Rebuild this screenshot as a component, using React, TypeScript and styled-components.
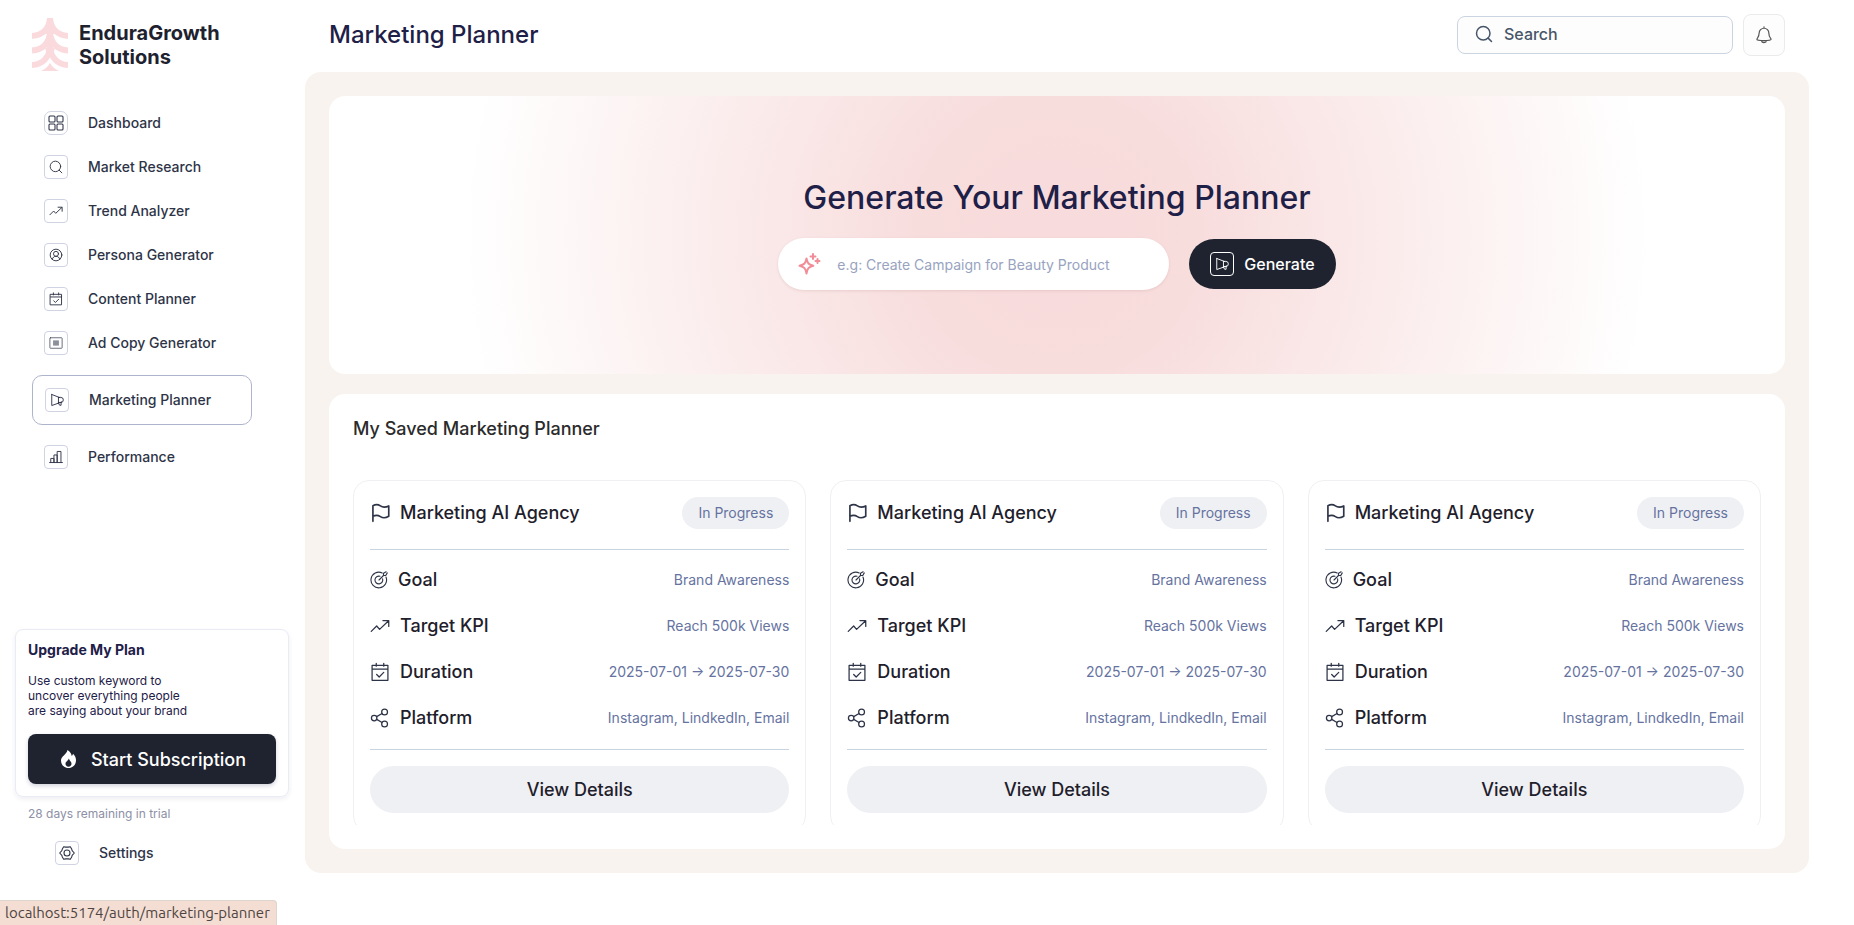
import React from 'react';
import styled, { createGlobalStyle, css } from 'styled-components';

const GlobalStyle = createGlobalStyle`
  *, *::before, *::after { box-sizing: border-box; }
  body { margin: 0; background: #fff; font-family: Inter, sans-serif; color: #1f2430; }
  h1, h2, h3, p, ul, dl, dd { margin: 0; padding: 0; }
  button, input { font-family: inherit; }
`;

const Page = styled.div`
  display: flex;
  min-height: 100vh;
`;

const Sidebar = styled.aside`
  flex: 0 0 305px;
  display: flex;
  flex-direction: column;
  padding: 18px 15px 0;
`;

const Brand = styled.div`
  display: flex;
  gap: 11px;
  padding-left: 17px;
  font-size: 20px;
  line-height: 24px;
  font-weight: 700;
  color: #1e222f;

  span { padding-top: 3px; width: 160px; }
`;

const Nav = styled.nav`
  display: flex;
  flex-direction: column;
  align-items: flex-start;
  padding: 30px 0 0 17px;
`;

const NavLink = styled.a<{ $active?: boolean }>`
  display: flex;
  align-items: center;
  gap: 20px;
  width: 220px;
  height: 44px;
  padding-left: 12px;
  border-radius: 10px;
  font-size: 14px;
  line-height: 20px;
  font-weight: 500;
  color: #2e3447;
  text-decoration: none;

  ${(p) => p.$active && css`
    height: 50px;
    margin: 10px 0;
    border: 1px solid #aeb4cb;
  `}
`;

const IconBox = styled.span<{ $light?: boolean; $round?: boolean }>`
  display: grid;
  place-items: center;
  width: 24px;
  height: 24px;
  border: 1px solid ${(p) => (p.$light ? '#fff' : '#d0d3e2')};
  border-radius: ${(p) => (p.$round ? 7 : 4)}px;
`;

const SidebarFoot = styled.div`
  margin-top: auto;
  padding-bottom: 50px;
`;

const Upgrade = styled.section`
  width: 274px;
  padding: 10px 12px 12px;
  border: 1px solid #e9ebf5;
  border-radius: 8px;
  box-shadow: 0 2px 5px rgba(40, 40, 80, 0.08);
  color: #1e2048;

  h2 { font-size: 14px; line-height: 20px; font-weight: 700; }
  p { padding: 13px 0 16px; width: 200px; font-size: 12px; line-height: 15px; }
`;

const Subscribe = styled.button`
  display: flex;
  align-items: center;
  justify-content: center;
  gap: 14px;
  width: 100%;
  height: 50px;
  padding: 0 6px 0 8px;
  border: 0;
  border-radius: 8px;
  background: #1f232f;
  box-shadow: 0 2px 4px rgba(30, 30, 90, 0.2);
  color: #fff;
  font-size: 18px;
  font-weight: 500;
`;

const Trial = styled.p`
  padding: 9px 13px 10px;
  font-size: 12px;
  line-height: 15px;
  color: #8d90a6;
`;

const FootNav = styled.nav`
  padding-left: 28px;
`;

const Main = styled.main`
  flex: 1;
  min-width: 0;
  padding-right: 45px;
`;

const TopBar = styled.header`
  display: flex;
  align-items: center;
  height: 72px;
  padding: 0 24px 2px;

  h1 { flex: 1; font-size: 24px; line-height: 32px; font-weight: 500; color: #1e2048; }
`;

const SearchBox = styled.label`
  display: flex;
  align-items: center;
  gap: 11px;
  width: 276px;
  height: 38px;
  padding: 0 17px 2px;
  border: 1px solid #cbd5e1;
  border-radius: 8px;
  background: #fdfdfd;
  color: #475569;
`;

const TextInput = styled.input`
  flex: 1;
  min-width: 0;
  padding: 0;
  border: 0;
  outline: 0;
  background: none;
  font-size: 16px;
  font-weight: 500;
  color: #475569;

  &::placeholder { color: #475569; opacity: 1; }
`;

const BellButton = styled.button`
  display: grid;
  place-items: center;
  width: 42px;
  height: 42px;
  margin-left: 10px;
  padding: 0;
  border: 1px solid #ebebeb;
  border-radius: 8px;
  background: #fdfdfd;
  color: #555;
`;

const Content = styled.div`
  display: flex;
  flex-direction: column;
  gap: 20px;
  padding: 24px;
  border-radius: 16px;
  background: #f8f3ee;
`;

const Hero = styled.section`
  display: flex;
  flex-direction: column;
  align-items: center;
  gap: 20px;
  padding: 82px 24px 84px;
  border-radius: 16px;
  background: radial-gradient(circle at center, #f8dbdc 0%, #f8dddd 19%, #fff 80%);

  h2 { font-size: 32px; line-height: 40px; font-weight: 500; color: #1e2048; }
`;

const PromptRow = styled.form`
  display: flex;
  align-items: center;
  gap: 20px;
`;

const PromptBox = styled.label`
  display: flex;
  align-items: center;
  gap: 16px;
  width: 391px;
  height: 52px;
  padding: 0 19px;
  border-radius: 26px;
  background: #fff;
  box-shadow: 0 1px 3px rgba(120, 60, 60, 0.12);
`;

const PromptInput = styled(TextInput)`
  font-size: 14px;
  font-weight: 400;

  &::placeholder { color: #98a3c0; }
`;

const GenerateButton = styled.button`
  display: flex;
  align-items: center;
  gap: 10px;
  height: 50px;
  padding: 0 21px;
  border: 0;
  border-radius: 25px;
  background: #1f232f;
  color: #fff;
  font-size: 16px;
  font-weight: 500;
`;

const Saved = styled.section`
  padding: 24px;
  border-radius: 16px;
  background: #fff;

  > h2 { font-size: 18px; line-height: 22px; font-weight: 500; color: #2b2b2b; }
`;

const CardViewport = styled.div`
  display: grid;
  grid-template-columns: repeat(3, 1fr);
  gap: 24px;
  height: 345px;
  margin-top: 40px;
  overflow: hidden;
`;

const PlanCard = styled.article`
  height: 352px;
  padding: 16px;
  border: 1px solid #f0f0f3;
  border-radius: 16px;
`;

const CardHead = styled.header`
  display: flex;
  align-items: center;
  gap: 10px;
  padding-bottom: 20px;
  border-bottom: 1px solid #c8d4df;
  color: #2e3447;

  h3 { flex: 1; font-size: 18px; line-height: 24px; font-weight: 500; color: #1e202b; }
`;

const Status = styled.span`
  height: 32px;
  padding: 0 16px;
  border-radius: 16px;
  background: #eff0f4;
  font-size: 14px;
  line-height: 32px;
  color: #66739f;
`;

const Facts = styled.dl`
  display: flex;
  flex-direction: column;
  gap: 22px;
  padding: 18px 0 19px;
  border-bottom: 1px solid #c8d4df;
`;

const Fact = styled.div`
  display: flex;
  align-items: center;
  justify-content: space-between;
  height: 24px;

  dt {
    display: flex;
    align-items: center;
    gap: 10px;
    font-size: 18px;
    line-height: 24px;
    font-weight: 500;
    color: #1e202b;
  }
  svg { color: #2e3447; }
  dd { font-size: 14px; line-height: 20px; color: #66739f; }
`;

const DetailsButton = styled.button`
  width: 100%;
  height: 47px;
  margin-top: 16px;
  border: 0;
  border-radius: 24px;
  background: #eff0f4;
  font-size: 18px;
  font-weight: 500;
  color: #1e202b;
`;

const LinkStatus = styled.div`
  position: fixed;
  left: 0;
  bottom: 0;
  height: 25px;
  padding: 0 6px 0 5px;
  border-top: 1px solid #dcd5d0;
  border-right: 1px solid #dcd5d0;
  border-radius: 0 4px 0 0;
  background: #f4ddd2;
  font-family: Ubuntu, "Noto Sans", sans-serif;
  font-size: 15px;
  line-height: 24px;
  color: #4e4542;
`;

type IconName = 'grid' | 'search' | 'trend' | 'persona' | 'calendar' | 'adcopy' | 'megaphone' | 'bars' | 'gear' | 'flag' | 'target' | 'share' | 'bell' | 'sparkle';

const shapes: Record<IconName, React.ReactNode> = {
  grid: <><rect x="1.5" y="1.5" width="9" height="9" rx="1.5" /><rect x="13.5" y="1.5" width="9" height="9" rx="1.5" /><rect x="1.5" y="13.5" width="9" height="9" rx="1.5" /><rect x="13.5" y="13.5" width="9" height="9" rx="1.5" /></>,
  search: <><circle cx="11" cy="11" r="9" /><path d="m17.5 17.5 4.5 4.5" /></>,
  trend: <path d="M1.5 18.5 8 12l3.5 4L22 6M15.5 5.500H22.500V12.500" />,
  persona: <><circle cx="12" cy="12" r="10" /><circle cx="12" cy="10" r="4.3" /><path d="M5.500 19.500C6.500 15.500 9 14.300 12 14.300s5.500 1.200 6.500 5.200" /></>,
  calendar: <path d="M2.500 4h19v18h-19zM2.500 8.500h19M7.500 1.500V5M16.500 1.500V5M8 15l3 3 5.500-5.500" />,
  adcopy: <><rect x="1.5" y="3" width="21" height="18" rx="1" strokeOpacity="0.75" /><rect x="7" y="7.5" width="10" height="9" fill="currentColor" fillOpacity="0.55" stroke="none" /></>,
  megaphone: <path d="M3 2.500v19L20 15.500M3 2.500l14 5.500M14.500 7.500v9.500M14.500 7.500h4a4.300 4.300 0 0 1 0 8.700h-4M14.500 17.500l2 3.500h2.500v-5" />,
  bars: <path d="M1 21.500h22M3 21.500V14.500h5.500v7M8.500 21.500V8.500h5.500v13M14 21.500V2.500h6.500v19" />,
  gear: <><path d="M7 2.500 10 3.200h4l3-.7 2 3.500.7 2.500L23 12l-3.300 3.500-.7 2.500-2 3.500-3-.7h-4l-3 .7-2-3.500-.7-2.500L1 12l3.300-3.500L5 6z" /><circle cx="12" cy="12" r="4.5" /></>,
  flag: <path d="M3.500 22V3.200c4-2.200 6.500-1.500 9 .3s5.500 2.300 10 0v12.500c-4.500 2.500-7.500 2-10 .3s-5-2.500-9-.3" />,
  target: <><path d="M21.300 8a10.400 10.400 0 1 1-5-5.300" /><path d="M16.800 10.500a5.200 5.200 0 1 1-3.500-3.500" /><path d="m12 12 6-6M18 6V3l3.500-2M18 6h3L23 2.500" /></>,
  share: <><circle cx="5" cy="12" r="3.3" /><circle cx="17.5" cy="4.8" r="3.5" /><circle cx="17.5" cy="19.2" r="3.5" /><path d="m8 10.300 6.500-3.700M8 13.700l6.500 3.700" /></>,
  bell: <path d="M5.500 9.500a6.500 6.500 0 0 1 13 0c0 6 3 6.500 3 8.300 0 1-1.500 1.700-9.500 1.700s-9.500-.7-9.500-1.700c0-1.800 3-2.300 3-8.300zM12 3V1M8.500 19.500c.5 3.500 6.500 3.500 7 0" />,
  sparkle: <><path d="M9.500 6.500c1 5 2 6 6.800 7.300-4.800 1.300-5.800 2.300-6.800 7.700-1-5.400-2-6.400-7-7.700 5-1.300 6-2.300 7-7.300z" /><path d="M16 2v5M13.500 4.500h5M20.500 7v4M18.500 9h4" /></>,
};

function Icon({ name, size = 14, stroke = 1.6 }: { name: IconName; size?: number; stroke?: number }) {
  return (
    <svg width={size} height={size} viewBox="0 0 24 24" fill="none" stroke="currentColor" strokeWidth={stroke} strokeLinecap="round" strokeLinejoin="round" aria-hidden="true">
      {shapes[name]}
    </svg>
  );
}

function TreeLogo() {
  return (
    <svg width="36" height="53" viewBox="0 0 36 53" fill="none" aria-hidden="true">
      <g stroke="#fadadd" strokeWidth="6">
        <path d="M18 0C17.500 11 10 17.500 0 18M18 0C18.500 11 26 17.500 36 18" />
        <path d="M18 14C17.500 25.500 10 32 0 32.500M18 14C18.500 25.500 26 32 36 32.500" />
        <path d="M18 28C17.500 40 10 46.500 0 47M18 28C18.500 40 26 46.500 36 47" />
      </g>
      <path d="M18 6l5 10h-2v14h2l-3 9h-4l-3-9h2V16h-2zM9 53c4-1.500 7-4.500 9-8 2 3.500 5 6.500 9 8z" fill="#fadadd" />
    </svg>
  );
}

function Flame() {
  return (
    <svg width="17" height="18" viewBox="0 0 17 18" fill="#fff" fillRule="evenodd" aria-hidden="true">
      <path d="M7.500 0c3 2 4 4 4.200 6 .8-.5 1.200-1.300 1.300-2.200C15 5.500 16 8 16 10.300 16 14.800 12.800 18 8.500 18S1 14.800 1 10.500C1 6 6.500 5 7.500 0zM8.800 8.500c-.5 2.300-3.300 3-3.300 5.300 0 1.700 1.300 2.900 3 2.900s3-1.200 3-2.900c0-2.300-2-3-2.700-5.300z" />
    </svg>
  );
}

const navItems: { icon: IconName; label: string; href: string }[] = [
  { icon: 'grid', label: 'Dashboard', href: '#dashboard' },
  { icon: 'search', label: 'Market Research', href: '#market-research' },
  { icon: 'trend', label: 'Trend Analyzer', href: '#trend-analyzer' },
  { icon: 'persona', label: 'Persona Generator', href: '#persona-generator' },
  { icon: 'calendar', label: 'Content Planner', href: '#content-planner' },
  { icon: 'adcopy', label: 'Ad Copy Generator', href: '#ad-copy-generator' },
  { icon: 'megaphone', label: 'Marketing Planner', href: '#marketing-planner' },
  { icon: 'bars', label: 'Performance', href: '#performance' },
];

const facts: { icon: IconName; size: number; label: string; value: string }[] = [
  { icon: 'target', size: 18, label: 'Goal', value: 'Brand Awareness' },
  { icon: 'trend', size: 20, label: 'Target KPI', value: 'Reach 500k Views' },
  { icon: 'calendar', size: 20, label: 'Duration', value: '2025-07-01 → 2025-07-30' },
  { icon: 'share', size: 20, label: 'Platform', value: 'Instagram, LindkedIn, Email' },
];

const plans = [1, 2, 3].map((id) => ({ id, title: 'Marketing AI Agency', status: 'In Progress' }));

export default function App() {
  return (
    <>
      <GlobalStyle />
      <Page>
        <Sidebar>
          <Brand>
            <TreeLogo />
            <span>EnduraGrowth Solutions</span>
          </Brand>
          <Nav aria-label="Main">
            {navItems.map((item) => (
              <NavLink key={item.label} href={item.href} $active={item.icon === 'megaphone'}>
                <IconBox $round={item.icon === 'grid'}><Icon name={item.icon} size={item.icon === 'grid' ? 16 : 14} /></IconBox>
                {item.label}
              </NavLink>
            ))}
          </Nav>
          <SidebarFoot>
            <Upgrade>
              <h2>Upgrade My Plan</h2>
              <p>Use custom keyword to<br />uncover everything people<br />are saying about your brand</p>
              <Subscribe type="button"><Flame />Start Subscription</Subscribe>
            </Upgrade>
            <Trial>28 days remaining in trial</Trial>
            <FootNav aria-label="Settings">
              <NavLink href="#settings"><IconBox><Icon name="gear" size={16} /></IconBox>Settings</NavLink>
            </FootNav>
          </SidebarFoot>
        </Sidebar>
        <Main>
          <TopBar>
            <h1>Marketing Planner</h1>
            <SearchBox>
              <Icon name="search" size={18} stroke={2} />
              <TextInput type="text" placeholder="Search" aria-label="Search" />
            </SearchBox>
            <BellButton type="button" aria-label="Notifications"><Icon name="bell" size={18} /></BellButton>
          </TopBar>
          <Content>
            <Hero>
              <h2>Generate Your Marketing Planner</h2>
              <PromptRow onSubmit={(e) => e.preventDefault()}>
                <PromptBox>
                  <svg width="24" height="24" viewBox="0 0 24 24" fill="none" stroke="#f08d97" strokeWidth="2" strokeLinecap="round" strokeLinejoin="round" aria-hidden="true">{shapes.sparkle}</svg>
                  <PromptInput type="text" placeholder="e.g: Create Campaign for Beauty Product" aria-label="Campaign prompt" />
                </PromptBox>
                <GenerateButton type="submit"><IconBox $light><Icon name="megaphone" /></IconBox>Generate</GenerateButton>
              </PromptRow>
            </Hero>
            <Saved>
              <h2>My Saved Marketing Planner</h2>
              <CardViewport>
                {plans.map((plan) => (
                  <PlanCard key={plan.id}>
                    <CardHead>
                      <Icon name="flag" size={20} stroke={2} />
                      <h3>{plan.title}</h3>
                      <Status>{plan.status}</Status>
                    </CardHead>
                    <Facts>
                      {facts.map((fact) => (
                        <Fact key={fact.label}>
                          <dt><Icon name={fact.icon} size={fact.size} stroke={1.5} />{fact.label}</dt>
                          <dd>{fact.value}</dd>
                        </Fact>
                      ))}
                    </Facts>
                    <DetailsButton type="button">View Details</DetailsButton>
                  </PlanCard>
                ))}
              </CardViewport>
            </Saved>
          </Content>
        </Main>
      </Page>
      <LinkStatus>localhost:5174/auth/marketing-planner</LinkStatus>
    </>
  );
}
